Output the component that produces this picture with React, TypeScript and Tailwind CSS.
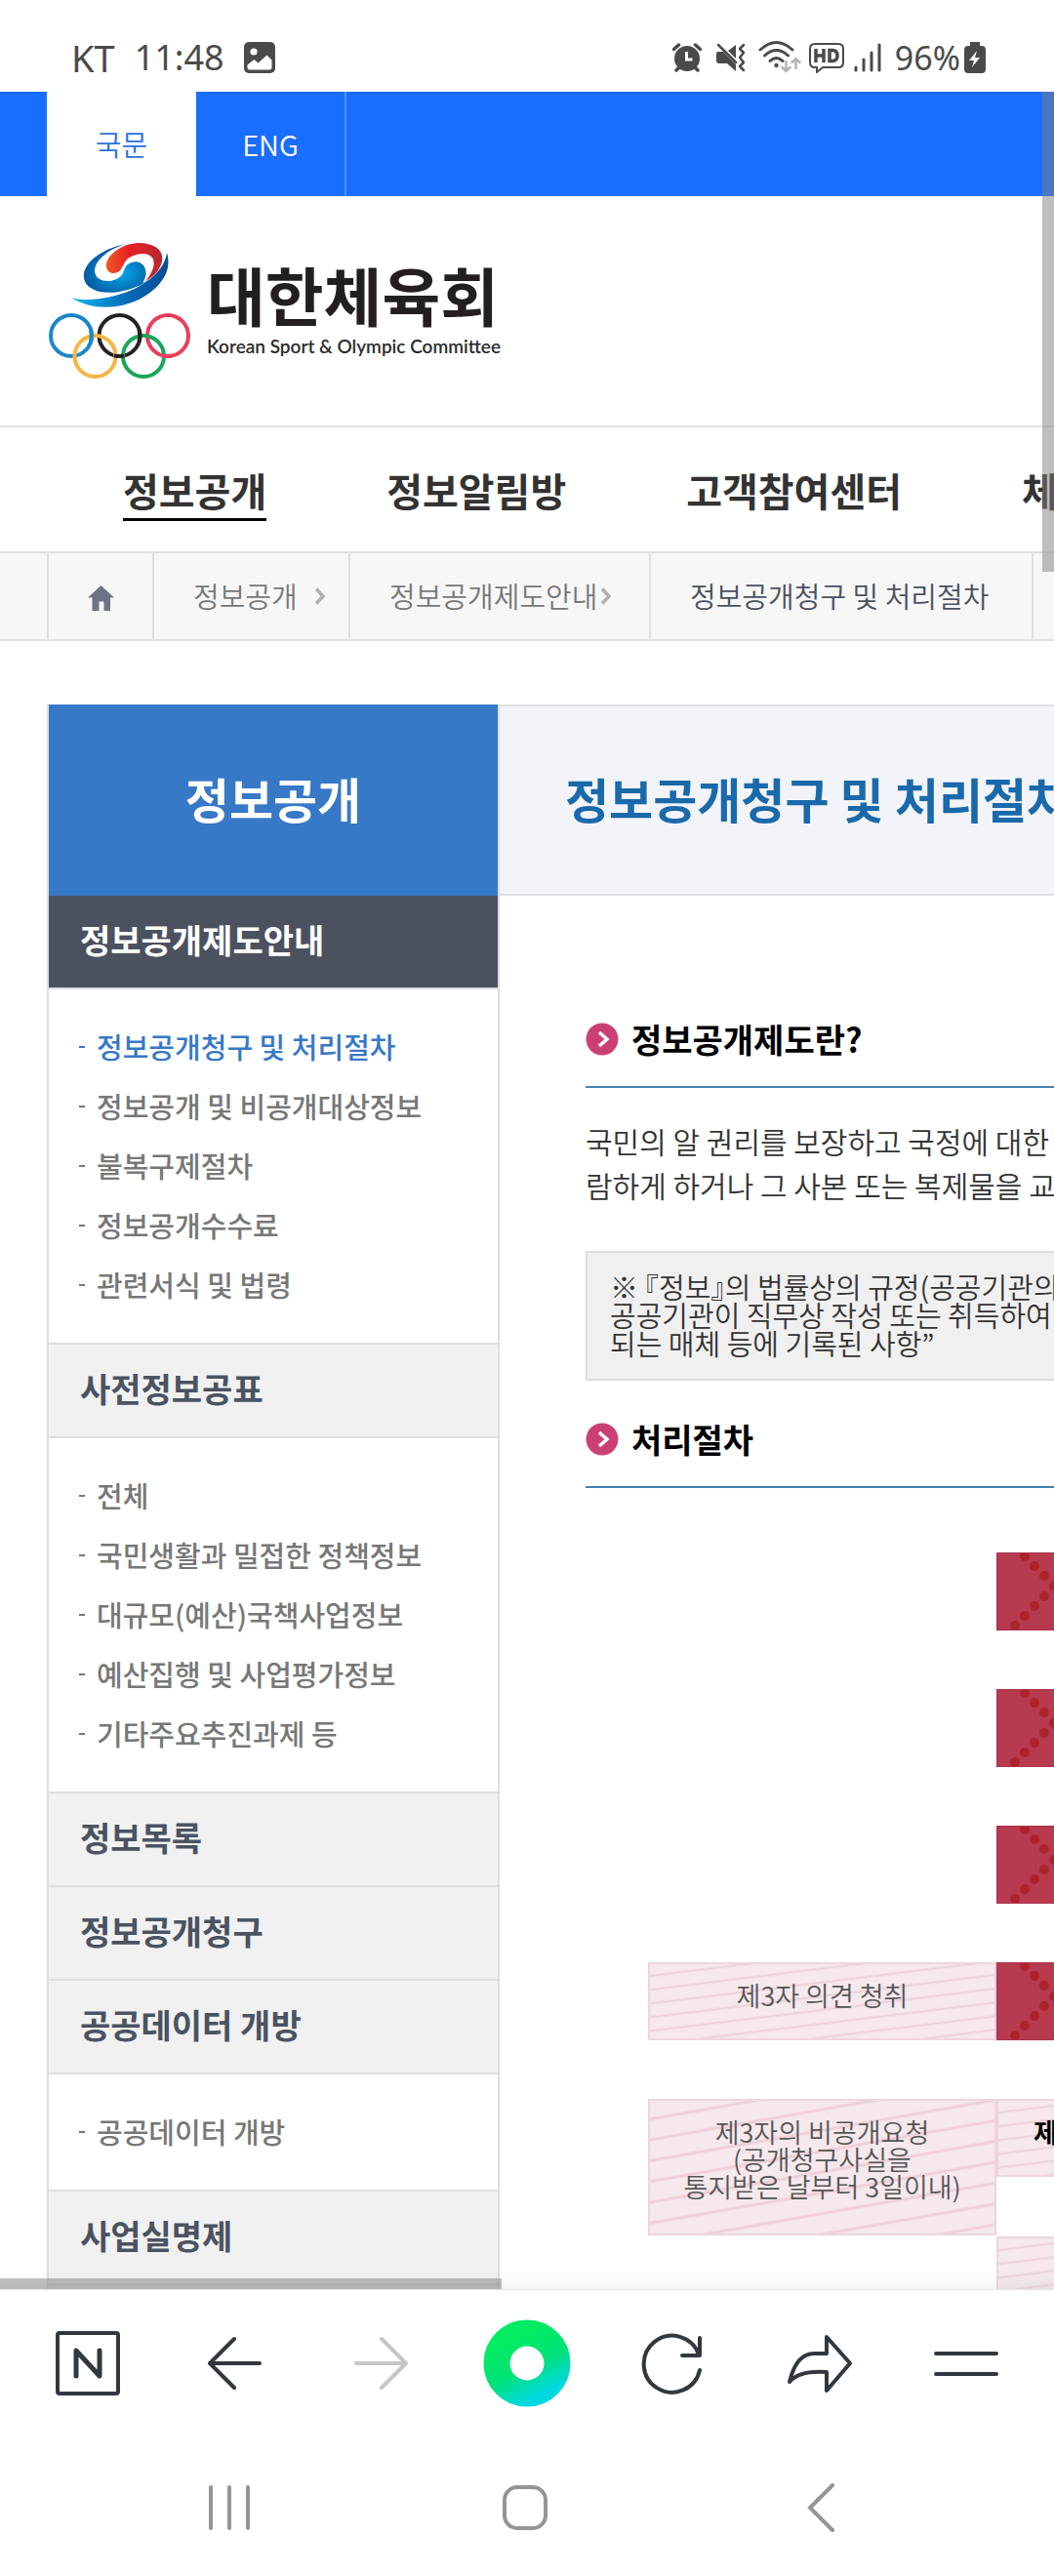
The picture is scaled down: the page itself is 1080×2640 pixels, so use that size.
import type { ReactNode } from 'react';

interface MenuGroup {
  title: string;
  active?: boolean;
  items?: string[];
}

const NAV = ['정보공개', '정보알림방', '고객참여센터', '체육정보'];

const MENU: MenuGroup[] = [
  {
    title: '정보공개제도안내',
    active: true,
    items: ['정보공개청구 및 처리절차', '정보공개 및 비공개대상정보', '불복구제절차', '정보공개수수료', '관련서식 및 법령'],
  },
  {
    title: '사전정보공표',
    items: ['전체', '국민생활과 밀접한 정책정보', '대규모(예산)국책사업정보', '예산집행 및 사업평가정보', '기타주요추진과제 등'],
  },
  { title: '정보목록' },
  { title: '정보공개청구' },
  { title: '공공데이터 개방', items: ['공공데이터 개방'] },
  { title: '사업실명제' },
];

const CURRENT = '정보공개청구 및 처리절차';

function StatusBar() {
  return (
    <div className="flex h-[94px] shrink-0 items-center justify-between bg-white pt-6 pl-[73px] pr-[70px] font-['Noto_Sans'] text-[#4a4a4a]">
      <div className="flex items-center">
        <span className="text-[38px] leading-10">KT</span>
        <span className="ml-5 text-[36px] leading-10">11:48</span>
        <svg className="ml-5 h-8 w-8" viewBox="0 0 32 32">
          <rect x="0" y="0" width="32" height="32" rx="5" fill="#4a4a4a" />
          <circle cx="10" cy="10" r="3.6" fill="#fff" />
          <path d="M3.5 23.5l7-5.5 4 3.5 9-8 5 5v7.5a2.5 2.5 0 0 1-2.5 2.5H6a2.5 2.5 0 0 1-2.5-2.5z" fill="#fff" />
        </svg>
      </div>
      <div className="flex items-center">
        {/* Alarm */}
        <svg className="h-8 w-[30px]" viewBox="0 0 30 32" fill="#4a4a4a">
          <circle cx="15" cy="17" r="13" />
          <path d="M1.5 7.5l5-4.5M28.5 7.5l-5-4.5M4 29l4-4M26 29l-4-4" stroke="#4a4a4a" strokeWidth="3.5" strokeLinecap="round" />
          <path d="M14.5 10v8h6" stroke="#fff" strokeWidth="3" fill="none" />
        </svg>
        {/* Vibrate */}
        <svg className="ml-[14px] h-8 w-8" viewBox="0 0 32 32" fill="#4a4a4a">
          <path d="M2 10h6l13 13v7l-9-8H4q-3 0-3-3v-6q0-3 1-3zM21 3v14L13 9z" />
          <path d="M3 3l18 18" stroke="#4a4a4a" strokeWidth="2.5" strokeLinecap="round" />
          <path d="M29 3l-4 4 4 4-4 5 4 5-4 4 4 4" fill="none" stroke="#4a4a4a" strokeWidth="2.5" strokeLinecap="round" strokeLinejoin="round" />
        </svg>
        {/* Wifi */}
        <svg className="ml-3 h-9 w-11" viewBox="0 0 44 36" fill="none" strokeLinecap="round">
          <path d="M2 10q16.5-15 33 0M6.5 16q12-11 24 0M12 21.5q6.5-6 13 0" stroke="#4a4a4a" strokeWidth="3" />
          <circle cx="18.5" cy="26" r="2.2" fill="#4a4a4a" />
          <path d="M28.5 22v10m-4-4l4 4 4-4M38.5 29V19m-4 4l4-4 4 4" stroke="#b5b5b5" strokeWidth="2.5" />
        </svg>
        {/* HD voice */}
        <svg className="ml-2 h-8 w-9" viewBox="0 0 36 32" fill="none" stroke="#4a4a4a">
          <path d="M6 2h24q5 0 5 5v14q0 5-5 5H14l-6 5v-5H6q-5 0-5-5V7q0-5 5-5z" strokeWidth="2" />
          <path d="M7 7v14M15 7v14M7 14h8M21 8.5v11h3q5 0 5-5.5t-5-5.5z" strokeWidth="3.5" />
        </svg>
        {/* Signal */}
        <svg className="ml-[10px] h-8 w-7" viewBox="0 0 28 32" stroke="#4a4a4a" strokeWidth="3" strokeLinecap="round">
          <path d="M2 26v3M10 18v11M18 11v18M26 3v26" />
        </svg>
        <span className="ml-[14px] text-[34px] leading-10">96%</span>
        <svg className="ml-1 h-9 w-[22px]" viewBox="0 0 22 36">
          <path d="M6 2h10v4h2q4 0 4 4v20q0 4-4 4H4q-4 0-4-4V10q0-4 4-4h2z" fill="#4a4a4a" />
          <path d="M13 11L5 21h5l-2 7 8-10h-5z" fill="#fff" />
        </svg>
      </div>
    </div>
  );
}

function Logo() {
  return (
    <a href="#home" className="flex items-center">
      <svg className="h-[146px] w-[150px]" viewBox="48 246 150 146" fill="none">
        <defs>
          <linearGradient id="tail" x1="0" x2="1">
            <stop offset="0" stopColor="#0ab4ee" />
            <stop offset="0.6" stopColor="#0569b5" />
            <stop offset="1" stopColor="#0a4c93" />
          </linearGradient>
          <radialGradient id="body" cx="0.5" cy="0.6" r="0.6">
            <stop offset="0" stopColor="#06a9e6" />
            <stop offset="1" stopColor="#034a98" />
          </radialGradient>
          <linearGradient id="flame" x1="0" x2="1">
            <stop offset="0" stopColor="#f15a24" />
            <stop offset="0.4" stopColor="#e81f26" />
            <stop offset="1" stopColor="#b52a33" />
          </linearGradient>
        </defs>
        <path d="M73 305C85 309 102 307 118 303C145 296 168 280 171 259C176 275 168 290 152 301C135 314 100 322 73 305Z" fill="url(#tail)" />
        <path d="M129 250C100 256 84 272 86 285C88 297 104 302 122 299C138 296 152 290 160 280C155 285 151 288 146 290C150 284 150 279 149 276C147 269 140 267 135 269C129 271 128 274 126 280C120 291 98 291 97 278C97 266 112 255 129 250Z" fill="url(#body)" />
        <path d="M117 280C111 280 108 275 109 270C112 258 128 249 144 249C160 250 168 257 166 268C164 277 157 284 149 288C156 280 160 270 156 264C151 257 138 260 131 265C125 270 126 279 117 280Z" fill="url(#flame)" />
        <g strokeWidth="4">
          <circle cx="73" cy="344" r="21" stroke="#1b87c9" />
          <circle cx="122.5" cy="344" r="21" stroke="#262324" />
          <circle cx="172" cy="344" r="21" stroke="#ea3d5c" />
          <circle cx="97.5" cy="365" r="21" stroke="#f6b545" />
          <circle cx="147" cy="365" r="21" stroke="#19a65a" />
          <path d="M93 338a21 21 0 0 1 0 12" stroke="#1b87c9" />
          <path d="M142.5 338a21 21 0 0 1 0 12" stroke="#262324" />
          <path d="M127 364.5a21 21 0 0 1-10 0" stroke="#262324" />
          <path d="M176 364.5a21 21 0 0 1-10 0" stroke="#ea3d5c" />
        </g>
      </svg>
      <span className="ml-[14px] flex flex-col gap-2 pb-1 text-[#231f20]">
        <span className="text-[65px] font-bold leading-[68px]">대한체육회</span>
        <span className="font-['Lato'] text-[19px] font-semibold leading-6 text-[#2b2b2b]">Korean Sport &amp; Olympic Committee</span>
      </span>
    </a>
  );
}

function Chevron({ className }: { className: string }) {
  return (
    <svg className={className} viewBox="0 0 10 18" fill="none" stroke="#b0b0b0" strokeWidth="3.5">
      <path d="M1 1.5l7 7.5-7 7.5" />
    </svg>
  );
}

function Breadcrumb() {
  return (
    <nav className="flex h-[92px] overflow-hidden whitespace-nowrap border-y-2 border-[#e0e0e0] bg-[#f7f7f7] pl-12 text-[29px] font-[350] text-[#777]">
      <a href="#home" aria-label="홈" className="flex w-[108px] shrink-0 items-center border-l-2 border-[#e0e0e0] pl-10">
        <svg className="mt-1 h-[26px] w-[27px]" viewBox="0 0 27 26" fill="#6c7382">
          <path d="M13.5 0L27 12.5h-4V26h-6.5v-9.5h-5V26H4.5V12.5H0z" />
        </svg>
      </a>
      <a href="#info" className="flex w-[201px] shrink-0 items-center border-l-2 border-[#e0e0e0] pl-10">
        정보공개
        <Chevron className="ml-[18px] h-[18px] w-[10px]" />
      </a>
      <a href="#guide" className="flex w-[308px] shrink-0 items-center border-l-2 border-[#e0e0e0] pl-10">
        정보공개제도안내
        <Chevron className="ml-1 h-[18px] w-[10px]" />
      </a>
      <a href="#process" className="flex w-[394px] shrink-0 items-center border-x-2 border-[#e0e0e0] pl-10 text-[#4a5160]">
        {CURRENT}
      </a>
    </nav>
  );
}

function SideMenu() {
  return (
    <aside className="w-[464px] shrink-0 border-x-2 border-[#dfdfdf] bg-[#f1f1f1]">
      <h2 className="flex h-[196px] items-center justify-center bg-[#3778c7] pb-1 text-[49px] font-bold text-white">정보공개</h2>
      {MENU.map((group) => (
        <div key={group.title}>
          <h3
            className={`h-24 border-b-2 border-[#dfdfdf] pl-8 text-[34px] font-bold leading-[90px] ${
              group.active ? 'bg-[#4b515f] text-white' : 'text-[#4b5361]'
            }`}
          >
            <a href="#menu">{group.title}</a>
          </h3>
          {group.items && (
            <ul className="border-b-2 border-[#dfdfdf] bg-white pt-7 pb-[29px] pl-[31px] text-[29px] font-medium leading-[61px] text-[#777]">
              {group.items.map((item) => (
                <li key={item} className={item === CURRENT ? 'flex items-center text-[#3778c7]' : 'flex items-center'}>
                  <span className="mr-3 h-[2px] w-[6px] bg-current" />
                  <a href="#item">{item}</a>
                </li>
              ))}
            </ul>
          )}
        </div>
      ))}
    </aside>
  );
}

function SectionTitle({ children }: { children: ReactNode }) {
  return (
    <h3 className="flex items-center gap-[13px] border-b-2 border-[#3f83b5] pb-[31px] text-[34px] font-bold leading-[34px] text-black">
      <svg className="h-[34px] w-[34px]" viewBox="0 0 34 34" fill="none">
        <circle cx="17" cy="17" r="16.5" fill="#cb4073" />
        <path d="M14 10l8 7-8 7" stroke="#fff" strokeWidth="3.5" />
      </svg>
      {children}
    </h3>
  );
}

// Red step box, with the dotted arrow that runs off to the right
function StepBox() {
  const dots = [[28, 3], [38, 13], [48, 23], [58, 34], [48, 44], [38, 54], [28, 64], [18, 74]];
  return (
    <div className="h-20 overflow-hidden border border-[#a8344a] bg-[#b83a4f]">
      <svg className="h-[78px] w-16" viewBox="0 0 64 78" fill="#ab242b">
        {dots.map(([cx, cy]) => (
          <circle key={`${cx}-${cy}`} cx={cx} cy={cy} r="5" />
        ))}
      </svg>
    </div>
  );
}

const STRIPES = 'border-2 border-[#eed5dc] bg-[#f6e8ed] bg-[repeating-linear-gradient(173deg,#f6e8ed_0px,#f6e8ed_10px,#edd0d7_12px,#f6e8ed_14px)]';
const WIDE_STRIPES = 'border-2 border-[#eed5dc] bg-[#f6e8ed] bg-[repeating-linear-gradient(170deg,#f6e8ed_0px,#f6e8ed_16px,#edd0d7_18px,#edd0d7_19px,#f6e8ed_21px)]';

function Process() {
  return (
    <div className="mt-[66px] ml-16 grid grid-cols-[357px_1fr] gap-y-[60px] text-center text-[27px] font-[350] leading-7 text-[#555]">
      <div className="col-start-2"><StepBox /></div>
      <div className="col-start-2"><StepBox /></div>
      <div className="col-start-2"><StepBox /></div>
      <div className={`h-20 pt-[18px] ${STRIPES}`}>제3자 의견 청취</div>
      <StepBox />
      <div className={`h-[140px] pt-[18px] ${WIDE_STRIPES}`}>
        제3자의 비공개요청
        <br />
        (공개청구사실을
        <br />
        통지받은 날부터 3일이내)
      </div>
      <div className="flex flex-col gap-[61px] overflow-hidden whitespace-nowrap text-left">
        <div className={`h-20 pt-[18px] pl-9 font-bold text-black ${STRIPES}`}>제3자</div>
        <div className={`h-20 ${STRIPES}`} />
      </div>
    </div>
  );
}

function Content() {
  return (
    <main className="min-w-0 flex-1 overflow-hidden whitespace-nowrap">
      <h1 className="flex h-[196px] items-center border-y-2 border-[#dfdfdf] bg-[#f2f4f9] pb-1 pl-[67px] text-[49px] font-bold text-[#1a69ab]">
        {CURRENT}
      </h1>
      <div className="pl-[88px] pt-[130px]">
        <SectionTitle>정보공개제도란?</SectionTitle>
        <p className="mt-8 text-[30px] font-[350] leading-[45px] text-[#333]">
          국민의 알 권리를 보장하고 국정에 대한
          <br />
          람하게 하거나 그 사본 또는 복제물을 교부
        </p>
        <div className="mt-[45px] border-2 border-r-0 border-[#dcdcdc] bg-[#f0f0f0] pt-5 pb-[22px] pl-[23px] text-[29px] font-[350] leading-[29px] text-[#333]">
          ※ <span className="[font-feature-settings:'halt']">『정보』</span>의 법률상의 규정(공공기관의
          <br />
          공공기관이 직무상 작성 또는 취득하여
          <br />
          되는 매체 등에 기록된 사항”
        </div>
        <div className="mt-[43px]">
          <SectionTitle>처리절차</SectionTitle>
        </div>
        <Process />
      </div>
    </main>
  );
}

function ToolButton({ label, children }: { label: string; children: ReactNode }) {
  return (
    <button type="button" aria-label={label} className="flex h-full flex-1 items-center justify-center">
      {children}
    </button>
  );
}

function BrowserBar() {
  const line = 'h-[70px] w-[70px] fill-none stroke-[#33383e] stroke-4 [stroke-linecap:round] [stroke-linejoin:round]';
  return (
    <div className="flex h-[150px] shrink-0 items-center border-t border-[#e3e5e8] bg-white px-[15px]">
      <ToolButton label="네이버 홈">
        <svg className={line} viewBox="0 0 70 70">
          <rect x="4" y="4" width="62" height="62" rx="2" />
          <path d="M23 48V22l24 26V22" strokeWidth="5" />
        </svg>
      </ToolButton>
      <ToolButton label="뒤로">
        <svg className={line} viewBox="0 0 70 70">
          <path d="M61 35H10M35 10L10 35l25 25" />
        </svg>
      </ToolButton>
      <ToolButton label="앞으로">
        <svg className="h-[70px] w-[70px] fill-none stroke-[#c4c6c8] stroke-4 [stroke-linecap:round] [stroke-linejoin:round]" viewBox="0 0 70 70">
          <path d="M10 35h51M36 10l25 25-25 25" />
        </svg>
      </ToolButton>
      <ToolButton label="그린닷">
        <svg className="h-[90px] w-[90px]" viewBox="0 0 90 90">
          <defs>
            <linearGradient id="dot" x1="0.3" y1="0.1" x2="0.75" y2="1">
              <stop offset="0" stopColor="#03eb63" />
              <stop offset="0.5" stopColor="#03e275" />
              <stop offset="1" stopColor="#00d8e0" />
            </linearGradient>
          </defs>
          <circle cx="45" cy="45" r="31" fill="none" stroke="url(#dot)" strokeWidth="27" />
        </svg>
      </ToolButton>
      <ToolButton label="새로고침">
        <svg className={line} viewBox="0 0 70 70">
          <path d="M62 42A29 29 0 1 1 61 26M62 9v18H44" />
        </svg>
      </ToolButton>
      <ToolButton label="공유">
        <svg className={line} viewBox="0 0 70 70">
          <path d="M42 8l24 27-24 28V44q-28-2-38 10 7-29 25-29h13z" />
        </svg>
      </ToolButton>
      <ToolButton label="메뉴">
        <svg className={line} viewBox="0 0 70 70">
          <path d="M4 25h62M4 46h62" />
        </svg>
      </ToolButton>
    </div>
  );
}

function SystemBar() {
  const icon = 'h-[50px] w-[50px] fill-none stroke-[#959595] stroke-4 [stroke-linecap:round]';
  return (
    <div className="flex h-36 shrink-0 items-center bg-white pt-1 pl-[84px] pr-[88px]">
      <ToolButton label="최근 앱">
        <svg className={icon} viewBox="0 0 50 50">
          <path d="M6 4v42M25 4v42M44 4v42" />
        </svg>
      </ToolButton>
      <ToolButton label="홈 화면">
        <svg className={icon} viewBox="0 0 50 50">
          <rect x="4" y="4" width="42" height="42" rx="13" />
        </svg>
      </ToolButton>
      <ToolButton label="이전">
        <svg className={icon} viewBox="0 0 50 50">
          <path d="M37 2L14 25l23 23" />
        </svg>
      </ToolButton>
    </div>
  );
}

export default function App() {
  return (
    <div className="flex h-screen flex-col overflow-hidden bg-white font-['Noto_Sans_CJK_KR',sans-serif]">
      <StatusBar />
      <div className="relative min-h-0 flex-1 overflow-hidden">
        {/* Language */}
        <div className="flex h-[107px] bg-[#196dff] pl-12 text-[29px] font-[350]">
          <a href="#ko" className="flex w-[153px] items-center justify-center bg-white text-[#2a72e0]">국문</a>
          <a href="#en" className="flex w-[154px] items-center justify-center border-r-2 border-[#5291ff] text-white">ENG</a>
        </div>

        <header className="border-b-2 border-[#e2e2e2] pt-[45px] pb-[44px] pl-12">
          <Logo />
        </header>

        <nav className="flex h-[127px] gap-[123px] overflow-hidden whitespace-nowrap pl-[126px] pt-9 text-[40px] font-bold leading-[56px] text-[#333]">
          {NAV.map((name, i) => (
            <a key={name} href="#nav" className={i === 0 ? 'h-[60px] shrink-0 border-b-[3px] border-black' : 'shrink-0'}>
              {name}
            </a>
          ))}
        </nav>
        <Breadcrumb />

        <div className="mt-[65px] flex pl-12">
          <SideMenu />
          <Content />
        </div>

        {/* Scroll indicators and the fade above the toolbar */}
        <div className="absolute inset-x-0 bottom-0 h-5 bg-linear-to-b from-transparent to-slate-400/10" />
        <div className="absolute right-0 top-0 h-[492px] w-3 bg-[#7f7f7f]/50" />
        <div className="absolute bottom-0 left-0 h-[11px] w-[514px] bg-[#7f7f7f]/50" />
      </div>
      <BrowserBar />
      <SystemBar />
    </div>
  );
}
